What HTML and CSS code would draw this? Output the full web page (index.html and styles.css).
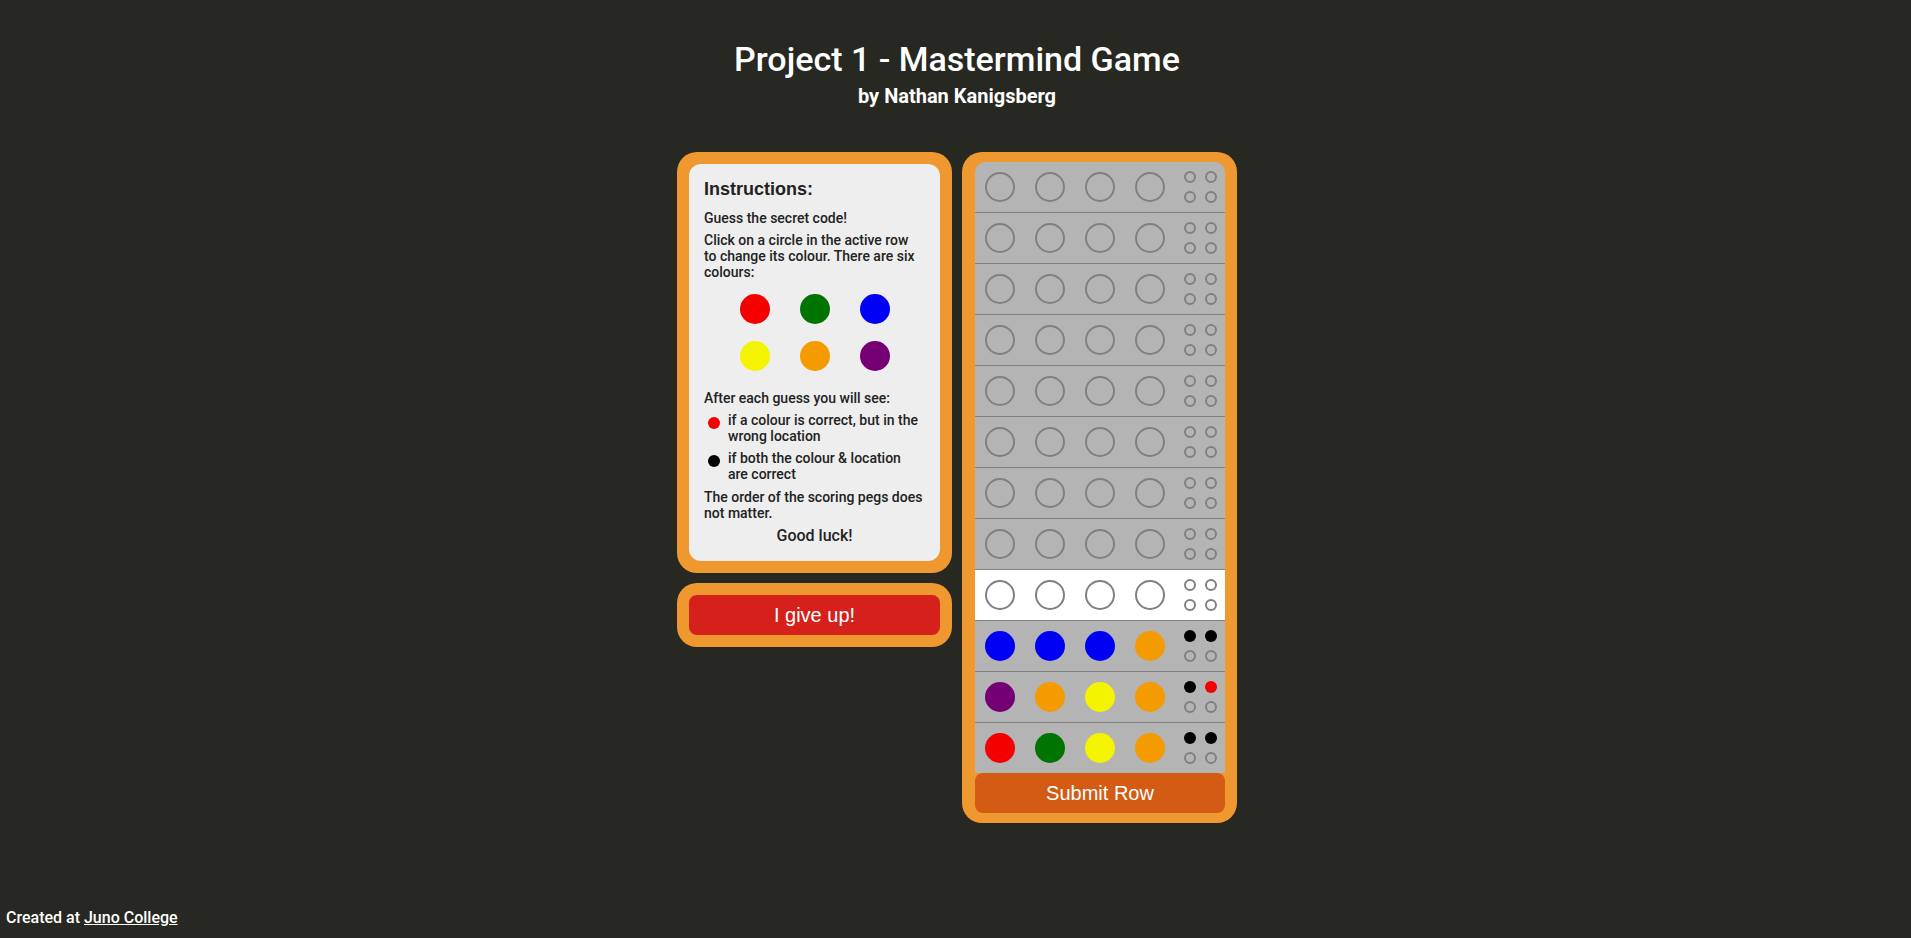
FILE: index.html
```html
<!DOCTYPE html>
<html lang="en">
<head>
<meta charset="utf-8">
<title>Project 1 - Mastermind Game</title>
<link rel="stylesheet" href="styles.css">
</head>
<body>
<header class="header">
  <h1 class="title">Project 1 - Mastermind Game</h1>
  <h2 class="subtitle">by Nathan Kanigsberg</h2>
</header>
<main class="game">
  <div class="side">
    <section class="frame">
      <div class="instructions">
        <h3 class="instr-title">Instructions:</h3>
        <p class="instr-text">Guess the secret code!</p>
        <p class="instr-text">Click on a circle in the active row<br>to change its colour. There are six<br>colours:</p>
        <div class="palette">
          <span class="dot red"></span>
          <span class="dot green"></span>
          <span class="dot blue"></span>
          <span class="dot yellow"></span>
          <span class="dot orange"></span>
          <span class="dot purple"></span>
        </div>
        <p class="instr-text after">After each guess you will see:</p>
        <ul class="legend">
          <li class="legend-item"><span class="legend-dot red"></span><span>if a colour is correct, but in the<br>wrong location</span></li>
          <li class="legend-item"><span class="legend-dot black"></span><span>if both the colour &amp; location<br>are correct</span></li>
        </ul>
        <p class="instr-text order">The order of the scoring pegs does<br>not matter.</p>
        <p class="luck">Good luck!</p>
      </div>
    </section>
    <section class="frame">
      <button class="btn btn-giveup">I give up!</button>
    </section>
  </div>
  <section class="frame board-frame">
    <div class="board">
      <div class="row"><span class="hole"></span><span class="hole"></span><span class="hole"></span><span class="hole"></span><span class="pegs"><i class="peg"></i><i class="peg"></i><i class="peg"></i><i class="peg"></i></span></div>
      <div class="row"><span class="hole"></span><span class="hole"></span><span class="hole"></span><span class="hole"></span><span class="pegs"><i class="peg"></i><i class="peg"></i><i class="peg"></i><i class="peg"></i></span></div>
      <div class="row"><span class="hole"></span><span class="hole"></span><span class="hole"></span><span class="hole"></span><span class="pegs"><i class="peg"></i><i class="peg"></i><i class="peg"></i><i class="peg"></i></span></div>
      <div class="row"><span class="hole"></span><span class="hole"></span><span class="hole"></span><span class="hole"></span><span class="pegs"><i class="peg"></i><i class="peg"></i><i class="peg"></i><i class="peg"></i></span></div>
      <div class="row"><span class="hole"></span><span class="hole"></span><span class="hole"></span><span class="hole"></span><span class="pegs"><i class="peg"></i><i class="peg"></i><i class="peg"></i><i class="peg"></i></span></div>
      <div class="row"><span class="hole"></span><span class="hole"></span><span class="hole"></span><span class="hole"></span><span class="pegs"><i class="peg"></i><i class="peg"></i><i class="peg"></i><i class="peg"></i></span></div>
      <div class="row"><span class="hole"></span><span class="hole"></span><span class="hole"></span><span class="hole"></span><span class="pegs"><i class="peg"></i><i class="peg"></i><i class="peg"></i><i class="peg"></i></span></div>
      <div class="row"><span class="hole"></span><span class="hole"></span><span class="hole"></span><span class="hole"></span><span class="pegs"><i class="peg"></i><i class="peg"></i><i class="peg"></i><i class="peg"></i></span></div>
      <div class="row active"><span class="hole"></span><span class="hole"></span><span class="hole"></span><span class="hole"></span><span class="pegs"><i class="peg"></i><i class="peg"></i><i class="peg"></i><i class="peg"></i></span></div>
      <div class="row"><span class="hole filled blue"></span><span class="hole filled blue"></span><span class="hole filled blue"></span><span class="hole filled orange"></span><span class="pegs"><i class="peg filled black"></i><i class="peg filled black"></i><i class="peg"></i><i class="peg"></i></span></div>
      <div class="row"><span class="hole filled purple"></span><span class="hole filled orange"></span><span class="hole filled yellow"></span><span class="hole filled orange"></span><span class="pegs"><i class="peg filled black"></i><i class="peg filled red"></i><i class="peg"></i><i class="peg"></i></span></div>
      <div class="row"><span class="hole filled red"></span><span class="hole filled green"></span><span class="hole filled yellow"></span><span class="hole filled orange"></span><span class="pegs"><i class="peg filled black"></i><i class="peg filled black"></i><i class="peg"></i><i class="peg"></i></span></div>
    </div>
    <button class="btn btn-submit">Submit Row</button>
  </section>
</main>
<footer class="footer">Created at <a class="footer-link" href="#">Juno College</a></footer>
</body>
</html>
```

FILE: styles.css
```css
* { box-sizing: border-box; }

html, body { height: 100%; }

body {
  margin: 0;
  min-height: 100vh;
  display: flex;
  flex-direction: column;
  background: #272822;
  color: #ffffff;
  font-family: Roboto, "Noto Sans", sans-serif;
}

.header {
  text-align: center;
  padding: 39px 0 0 3px;
}

.title {
  margin: 0;
  font-size: 34px;
  line-height: 40px;
  font-weight: 500;
}

.subtitle {
  margin: 6px 0 0;
  font-size: 20px;
  line-height: 22px;
  font-weight: 700;
}

.game {
  display: flex;
  justify-content: center;
  align-items: flex-start;
  gap: 10px;
  margin-top: 45px;
  padding-left: 3px;
}

.side {
  display: flex;
  flex-direction: column;
  gap: 10px;
  width: 275px;
}

.frame {
  background: #ef9830;
  border-radius: 20px;
  padding: 12px 12px;
}

.instructions {
  background: #eeeeee;
  color: #222222;
  border-radius: 12px;
  padding: 15px 15px 16px;
}

.instr-title {
  margin: 0 0 10px;
  font-family: "Liberation Sans", Arial, sans-serif;
  font-size: 18px;
  line-height: 21px;
  font-weight: 700;
}

.instr-text {
  margin: 0 0 6px;
  font-size: 14px;
  line-height: 16px;
  font-weight: 500;
  white-space: nowrap;
}

.palette {
  display: grid;
  grid-template-columns: repeat(3, 30px);
  column-gap: 30px;
  row-gap: 17px;
  justify-content: center;
  margin: 14px 0 19px;
}

.dot {
  width: 30px;
  height: 30px;
  border-radius: 50%;
}

.red { background: #f40000; }
.green { background: #007400; }
.blue { background: #0000f5; }
.yellow { background: #f4f400; }
.orange { background: #f49b00; }
.purple { background: #740074; }
.black { background: #000000; }

.legend {
  list-style: none;
  margin: 0;
  padding: 0;
  display: flex;
  flex-direction: column;
  gap: 6px;
}

.legend-item {
  display: flex;
  align-items: flex-start;
  font-size: 14px;
  line-height: 16px;
  font-weight: 500;
  white-space: nowrap;
}

.legend-dot {
  flex: none;
  width: 12px;
  height: 12px;
  border-radius: 50%;
  margin: 5px 8px 0 4px;
}

.order { margin: 7px 0 5px; }

.luck {
  margin: 0;
  text-align: center;
  font-size: 16px;
  line-height: 19px;
  font-weight: 500;
}

.btn {
  display: block;
  width: 100%;
  height: 40px;
  border: none;
  border-radius: 8px;
  color: #ffffff;
  font-family: "Liberation Sans", Arial, sans-serif;
  font-size: 20px;
  padding: 0;
}

.btn-giveup { background: #d6201b; }
.btn-submit { background: #d35b13; }

.board-frame {
  width: 275px;
  padding: 10px 12px 10px 13px;
}

.board {
  background: #b4b4b4;
  border-radius: 10px 10px 0 0;
  overflow: hidden;
}

.row {
  display: grid;
  grid-template-columns: repeat(5, 50px);
  align-items: center;
  justify-items: center;
  height: 51px;
  border-top: 1px solid #808080;
}

.row:first-child {
  height: 50px;
  border-top: none;
}

.row.active { background: #ffffff; }

.hole {
  width: 30px;
  height: 30px;
  border-radius: 50%;
  border: 2px solid #808080;
}

.hole.filled { border: none; }

.pegs {
  display: grid;
  grid-template-columns: repeat(2, 12px);
  column-gap: 9px;
  row-gap: 8px;
}

.peg {
  display: block;
  width: 12px;
  height: 12px;
  border-radius: 50%;
  border: 2px solid #808080;
}

.peg.filled { border: none; }

.footer {
  margin-top: auto;
  padding: 0 0 11px 6px;
  font-size: 16px;
  line-height: 18px;
  font-weight: 500;
}

.footer-link { color: #ffffff; }
```
